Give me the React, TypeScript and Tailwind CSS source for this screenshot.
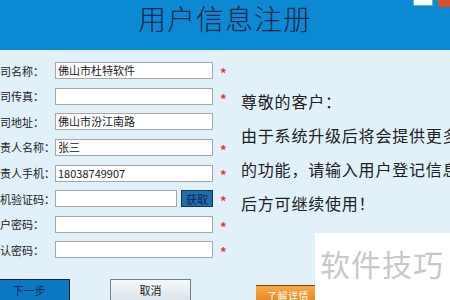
import React from 'react';

const fields = [
  { label: '公司名称：', value: '佛山市杜特软件', required: true },
  { label: '公司传真：', value: '', required: true },
  { label: '公司地址：', value: '佛山市汾江南路', required: false },
  { label: '负责人名称：', value: '张三', required: true },
  { label: '负责人手机：', value: '18038749907', required: true },
];

const passwords = [
  { label: '用户密码：' },
  { label: '确认密码：' },
];

const Label: React.FC<{ text: string }> = ({ text }) => (
  <div className="-ml-[11px] w-[66px] shrink-0 whitespace-nowrap text-[11px] text-[#222]">{text}</div>
);

const Star = () => <span className="ml-[7px] pt-[4px] text-[13px] font-bold text-[#e23a3a]">*</span>;

const Box: React.FC<{ value?: string; w: string }> = ({ value, w }) => (
  <div className={`${w} h-[17px] shrink-0 border border-[#a3a8ad] bg-white pl-[2px] text-[11px] leading-[14px] text-[#222]`}>
    {value}
  </div>
);

export default function App() {
  return (
    <div
      className="relative w-[450px] h-[300px] overflow-hidden bg-[#e1f0f9]"
      style={{ fontFamily: '"Noto Sans CJK SC", "Noto Sans", sans-serif' }}
    >
      {/* header */}
      <div className="relative h-[50px] bg-[#0b8ad3] flex justify-center">
        <h1 className="text-[28px] leading-[36px] font-light text-[#13264a] tracking-[1px]">用户信息注册</h1>
        <div className="absolute top-0 left-[413px] w-[20px] h-[6px] bg-white border border-t-0 border-[#5bb0e6]"></div>
        <div className="absolute top-0 left-[438px] w-[14px] h-[7px] bg-[#d9502a]"></div>
      </div>

      <div className="flex">
        {/* form */}
        <div className="w-[235px] shrink-0 pt-[8px]">
          {fields.map((f) => (
            <div key={f.label} className="flex items-center h-[25.6px]">
              <Label text={f.label} />
              <Box value={f.value} w="w-[158px]" />
              {f.required && <Star />}
            </div>
          ))}
          <div className="flex items-center h-[25.6px]">
            <Label text="手机验证码：" />
            <Box w="w-[122px]" />
            <button className="ml-[4px] w-[32px] h-[17px] bg-[#1f6fae] border border-[#0e3557] text-[11px] leading-[14px] text-[#0d2a48]">
              获取
            </button>
            <Star />
          </div>
          {passwords.map((p) => (
            <div key={p.label} className="flex items-center h-[25.6px]">
              <Label text={p.label} />
              <Box w="w-[158px]" />
              <Star />
            </div>
          ))}
          <div className="flex mt-[16px]">
            <button className="-ml-[12px] w-[82px] h-[23px] bg-[#0b78c4] border border-[#0a2540] text-[11px] text-[#0b2a4a]">
              下一步
            </button>
            <button className="ml-[40px] w-[81px] h-[23px] bg-gradient-to-b from-[#f6f9fb] to-[#d9e3ea] border border-[#6f7f8c] text-[11px] text-[#1b1b1b]">
              取消
            </button>
          </div>
        </div>

        {/* notice */}
        <div className="flex-1 pl-[6px] pt-[34px] overflow-hidden whitespace-nowrap text-[16px] leading-[34px] tracking-[0.8px] text-[#202020]">
          <p>尊敬的客户：</p>
          <p>由于系统升级后将会提供更多</p>
          <p>的功能，请输入用户登记信息</p>
          <p>后方可继续使用！</p>
          <button className="block mt-[65px] ml-[15px] w-[64px] h-[20px] bg-gradient-to-b from-[#f7ab45] to-[#e47c18] border-t border-[#7c4510] text-[10px] leading-[18px] tracking-[0.5px] text-white">
            了解详情
          </button>
        </div>
      </div>

      {/* watermark */}
      <div className="absolute left-[315px] top-[233px] w-[135px] h-[67px] bg-white pl-[5px] pt-[12px]">
        <span className="text-[30px] leading-[36px] tracking-[1px] text-[#c8c8c8]">软件技巧</span>
      </div>
    </div>
  );
}
